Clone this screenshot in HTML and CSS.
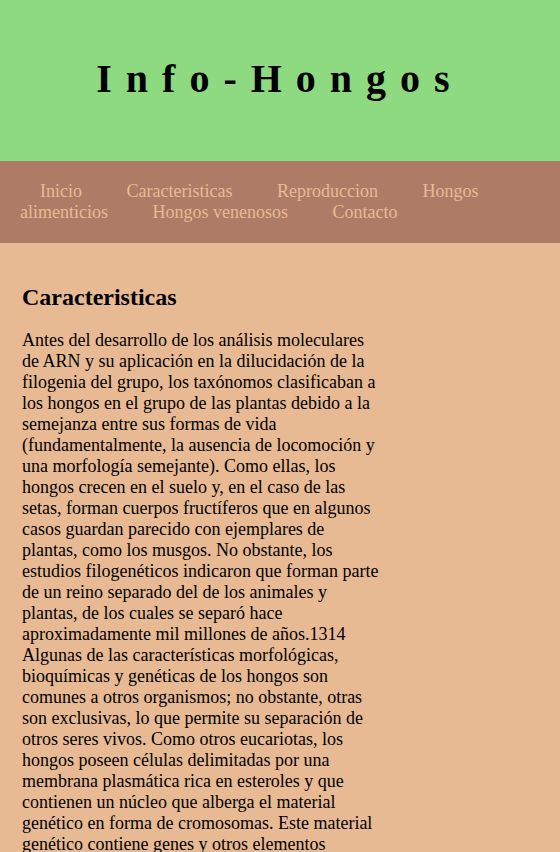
FILE: index.html
```html
<!DOCTYPE html>
<html lang="es">
<head>
<meta charset="utf-8">
<title>Info-Hongos</title>
<link rel="stylesheet" href="styles.css">
</head>
<body>
<header class="site-header">
  <h1 class="site-title">Info-Hongos</h1>
</header>
<nav class="site-nav">
  <a class="nav-link" href="#">Inicio</a>
  <a class="nav-link" href="#">Caracteristicas</a>
  <a class="nav-link" href="#">Reproduccion</a>
  <a class="nav-link" href="#">Hongos alimenticios</a>
  <a class="nav-link" href="#">Hongos venenosos</a>
  <a class="nav-link" href="#">Contacto</a>
</nav>
<main class="content">
  <article class="article">
    <h2 class="article-title">Caracteristicas</h2>
    <p class="article-text">Antes del desarrollo de los análisis moleculares de ARN y su aplicación en la dilucidación de la filogenia del grupo, los taxónomos clasificaban a los hongos en el grupo de las plantas debido a la semejanza entre sus formas de vida (fundamentalmente, la ausencia de locomoción y una morfología semejante). Como ellas, los hongos crecen en el suelo y, en el caso de las setas, forman cuerpos fructíferos que en algunos casos guardan parecido con ejemplares de plantas, como los musgos. No obstante, los estudios filogenéticos indicaron que forman parte de un reino separado del de los animales y plantas, de los cuales se separó hace aproximadamente mil millones de años.1314 Algunas de las características morfológicas, bioquímicas y genéticas de los hongos son comunes a otros organismos; no obstante, otras son exclusivas, lo que permite su separación de otros seres vivos. Como otros eucariotas, los hongos poseen células delimitadas por una membrana plasmática rica en esteroles y que contienen un núcleo que alberga el material genético en forma de cromosomas. Este material genético contiene genes y otros elementos codificantes, así como elementos no codificantes, tales como los intrones.</p>
  </article>
</main>
</body>
</html>
```

FILE: styles.css
```css
html, body {
  margin: 0;
  padding: 0;
}

body {
  background: #e8ba94;
  font-family: "Liberation Serif", "Times New Roman", serif;
  color: #000;
}

.site-header {
  background: #8eda81;
  padding: 56px 0 59px;
  text-align: center;
}

.site-title {
  margin: 0;
  font-size: 40px;
  line-height: 46px;
  font-weight: bold;
  letter-spacing: 14px;
}

.site-nav {
  background: #ae7b67;
  padding: 20px;
  font-size: 18px;
  line-height: 21px;
}

.nav-link {
  color: #e8ba94;
  text-decoration: none;
  margin: 0 20px;
}

.content {
  padding: 21px 22px 20px;
}

.article {
  width: 358px;
}

.article-title {
  font-size: 24px;
  margin: 20px 0 19px;
}

.article-text {
  font-size: 18px;
  margin: 0;
}
```
